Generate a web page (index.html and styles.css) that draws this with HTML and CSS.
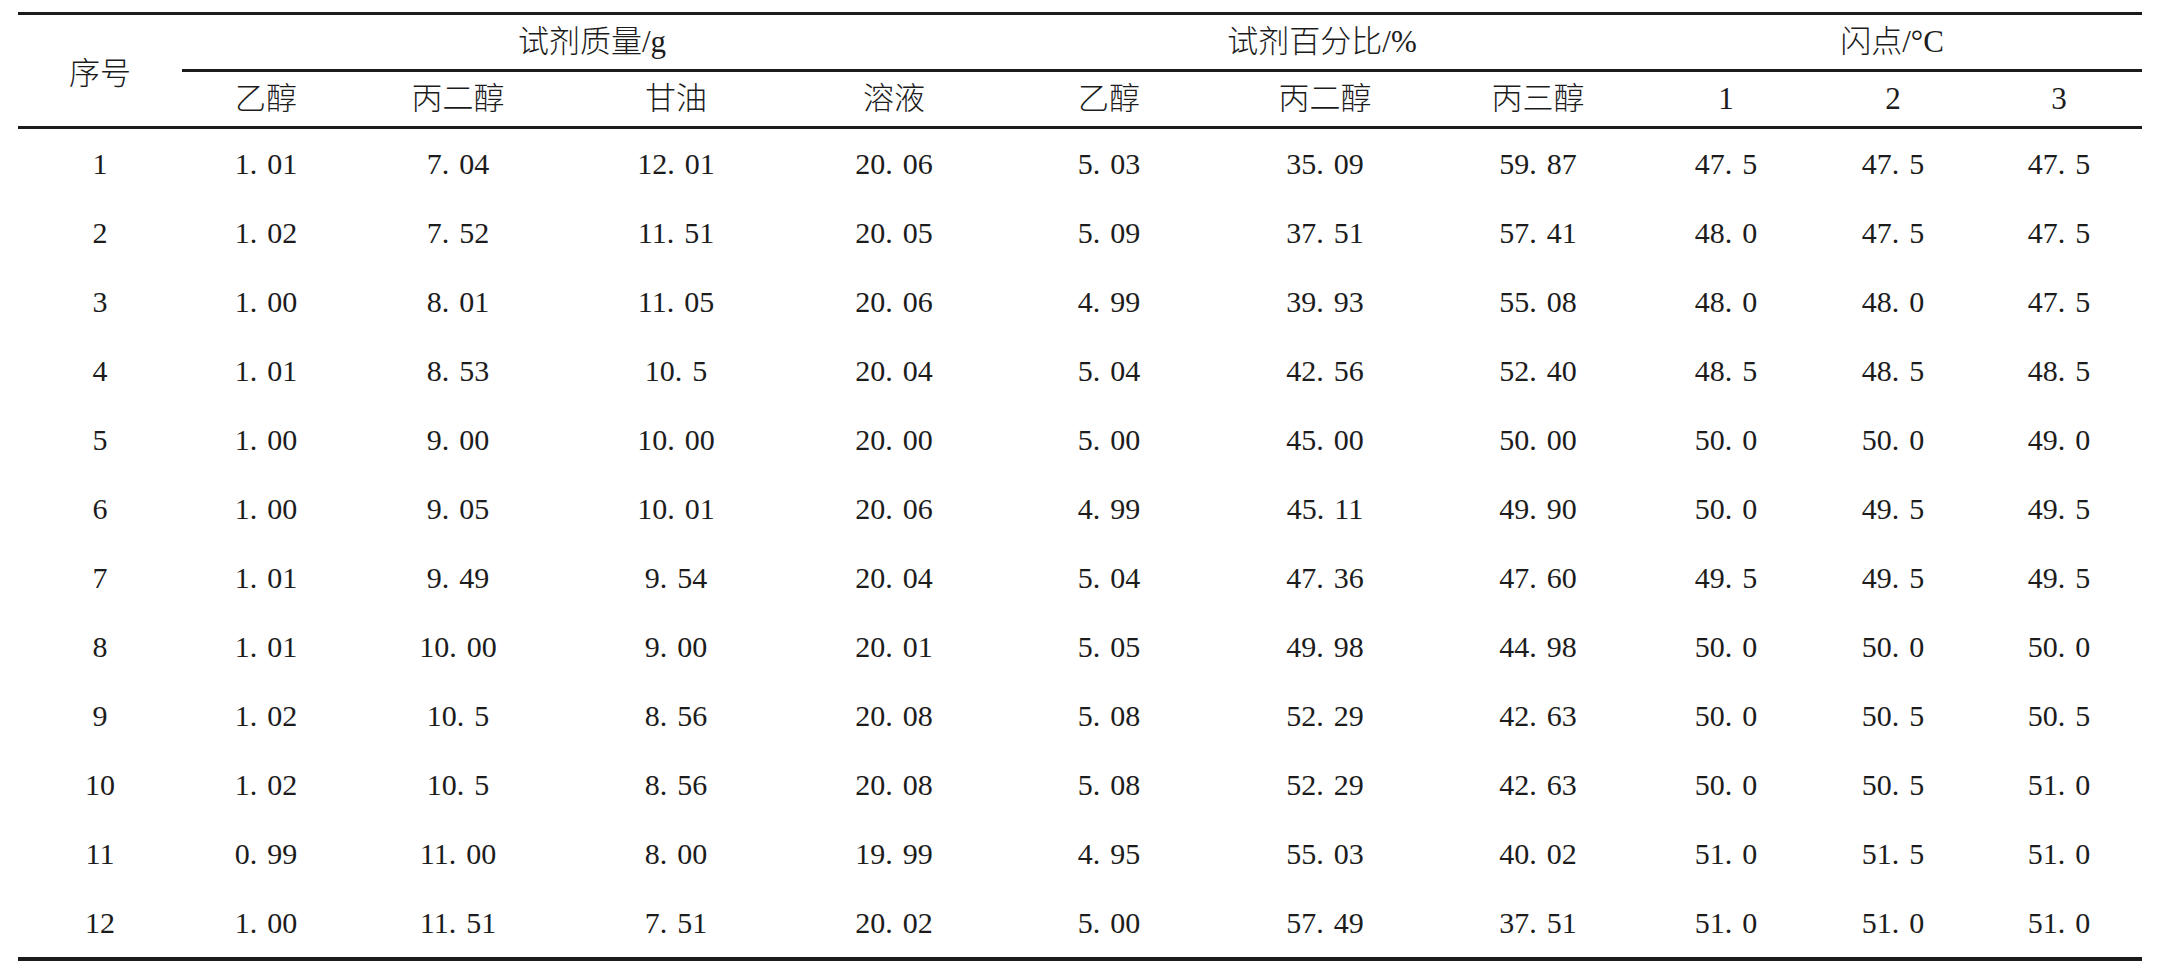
FILE: index.html
```html
<!DOCTYPE html>
<html lang="zh-CN">
<head>
<meta charset="utf-8">
<title>试剂配比与闪点</title>
<link rel="stylesheet" href="styles.css">
</head>
<body>
<table class="data">
  <colgroup>
    <col class="c0"><col class="c1"><col class="c2"><col class="c3"><col class="c4"><col class="c5"><col class="c6"><col class="c7"><col class="c8"><col class="c9"><col class="c10">
  </colgroup>
  <thead>
    <tr class="group">
      <th class="idx" rowspan="2">序号</th>
      <th class="grp" colspan="4"><div class="grp-label">试剂质量/g</div></th>
      <th class="grp" colspan="3"><div class="grp-label">试剂百分比/%</div></th>
      <th class="grp last" colspan="3"><div class="grp-label">闪点/°C</div></th>
    </tr>
    <tr class="sub">
      <th>乙醇</th><th>丙二醇</th><th>甘油</th><th>溶液</th>
      <th>乙醇</th><th>丙二醇</th><th>丙三醇</th>
      <th>1</th><th>2</th><th>3</th>
    </tr>
  </thead>
  <tbody>
    <tr><td>1</td><td>1<span class="d">.</span>01</td><td>7<span class="d">.</span>04</td><td>12<span class="d">.</span>01</td><td>20<span class="d">.</span>06</td><td>5<span class="d">.</span>03</td><td>35<span class="d">.</span>09</td><td>59<span class="d">.</span>87</td><td>47<span class="d">.</span>5</td><td>47<span class="d">.</span>5</td><td>47<span class="d">.</span>5</td></tr>
    <tr><td>2</td><td>1<span class="d">.</span>02</td><td>7<span class="d">.</span>52</td><td>11<span class="d">.</span>51</td><td>20<span class="d">.</span>05</td><td>5<span class="d">.</span>09</td><td>37<span class="d">.</span>51</td><td>57<span class="d">.</span>41</td><td>48<span class="d">.</span>0</td><td>47<span class="d">.</span>5</td><td>47<span class="d">.</span>5</td></tr>
    <tr><td>3</td><td>1<span class="d">.</span>00</td><td>8<span class="d">.</span>01</td><td>11<span class="d">.</span>05</td><td>20<span class="d">.</span>06</td><td>4<span class="d">.</span>99</td><td>39<span class="d">.</span>93</td><td>55<span class="d">.</span>08</td><td>48<span class="d">.</span>0</td><td>48<span class="d">.</span>0</td><td>47<span class="d">.</span>5</td></tr>
    <tr><td>4</td><td>1<span class="d">.</span>01</td><td>8<span class="d">.</span>53</td><td>10<span class="d">.</span>5</td><td>20<span class="d">.</span>04</td><td>5<span class="d">.</span>04</td><td>42<span class="d">.</span>56</td><td>52<span class="d">.</span>40</td><td>48<span class="d">.</span>5</td><td>48<span class="d">.</span>5</td><td>48<span class="d">.</span>5</td></tr>
    <tr><td>5</td><td>1<span class="d">.</span>00</td><td>9<span class="d">.</span>00</td><td>10<span class="d">.</span>00</td><td>20<span class="d">.</span>00</td><td>5<span class="d">.</span>00</td><td>45<span class="d">.</span>00</td><td>50<span class="d">.</span>00</td><td>50<span class="d">.</span>0</td><td>50<span class="d">.</span>0</td><td>49<span class="d">.</span>0</td></tr>
    <tr><td>6</td><td>1<span class="d">.</span>00</td><td>9<span class="d">.</span>05</td><td>10<span class="d">.</span>01</td><td>20<span class="d">.</span>06</td><td>4<span class="d">.</span>99</td><td>45<span class="d">.</span>11</td><td>49<span class="d">.</span>90</td><td>50<span class="d">.</span>0</td><td>49<span class="d">.</span>5</td><td>49<span class="d">.</span>5</td></tr>
    <tr><td>7</td><td>1<span class="d">.</span>01</td><td>9<span class="d">.</span>49</td><td>9<span class="d">.</span>54</td><td>20<span class="d">.</span>04</td><td>5<span class="d">.</span>04</td><td>47<span class="d">.</span>36</td><td>47<span class="d">.</span>60</td><td>49<span class="d">.</span>5</td><td>49<span class="d">.</span>5</td><td>49<span class="d">.</span>5</td></tr>
    <tr><td>8</td><td>1<span class="d">.</span>01</td><td>10<span class="d">.</span>00</td><td>9<span class="d">.</span>00</td><td>20<span class="d">.</span>01</td><td>5<span class="d">.</span>05</td><td>49<span class="d">.</span>98</td><td>44<span class="d">.</span>98</td><td>50<span class="d">.</span>0</td><td>50<span class="d">.</span>0</td><td>50<span class="d">.</span>0</td></tr>
    <tr><td>9</td><td>1<span class="d">.</span>02</td><td>10<span class="d">.</span>5</td><td>8<span class="d">.</span>56</td><td>20<span class="d">.</span>08</td><td>5<span class="d">.</span>08</td><td>52<span class="d">.</span>29</td><td>42<span class="d">.</span>63</td><td>50<span class="d">.</span>0</td><td>50<span class="d">.</span>5</td><td>50<span class="d">.</span>5</td></tr>
    <tr><td>10</td><td>1<span class="d">.</span>02</td><td>10<span class="d">.</span>5</td><td>8<span class="d">.</span>56</td><td>20<span class="d">.</span>08</td><td>5<span class="d">.</span>08</td><td>52<span class="d">.</span>29</td><td>42<span class="d">.</span>63</td><td>50<span class="d">.</span>0</td><td>50<span class="d">.</span>5</td><td>51<span class="d">.</span>0</td></tr>
    <tr><td>11</td><td>0<span class="d">.</span>99</td><td>11<span class="d">.</span>00</td><td>8<span class="d">.</span>00</td><td>19<span class="d">.</span>99</td><td>4<span class="d">.</span>95</td><td>55<span class="d">.</span>03</td><td>40<span class="d">.</span>02</td><td>51<span class="d">.</span>0</td><td>51<span class="d">.</span>5</td><td>51<span class="d">.</span>0</td></tr>
    <tr><td>12</td><td>1<span class="d">.</span>00</td><td>11<span class="d">.</span>51</td><td>7<span class="d">.</span>51</td><td>20<span class="d">.</span>02</td><td>5<span class="d">.</span>00</td><td>57<span class="d">.</span>49</td><td>37<span class="d">.</span>51</td><td>51<span class="d">.</span>0</td><td>51<span class="d">.</span>0</td><td>51<span class="d">.</span>0</td></tr>
  </tbody>
</table>
</body>
</html>
```

FILE: styles.css
```css
html, body {
  margin: 0;
  padding: 0;
  background: #ffffff;
}

body {
  padding: 12px 0 0 18px;
  color: #1c1c1c;
  font-family: "Liberation Serif", "Noto Sans CJK SC", serif;
}

.data {
  table-layout: fixed;
  width: 2124px;
  border-collapse: separate;
  border-spacing: 0;
  border-top: 3px solid #1c1c1c;
  border-bottom: 4px solid #1c1c1c;
}

.c0 { width: 164px; }
.c1 { width: 168px; }
.c2 { width: 216px; }
.c3 { width: 220px; }
.c4 { width: 216px; }
.c5 { width: 214px; }
.c6 { width: 218px; }
.c7 { width: 208px; }
.c8 { width: 168px; }
.c9 { width: 166px; }
.c10 { width: 166px; }

.data th,
.data td {
  padding: 0;
  text-align: center;
  white-space: nowrap;
}

.data th {
  font-size: 31px;
  font-weight: 300;
}

.data td {
  font-size: 30px;
  font-weight: 400;
  height: 69px;
  line-height: 69px;
}

.idx {
  vertical-align: middle;
  border-bottom: 3px solid #1c1c1c;
}

.grp {
  padding: 0 9px 0 11px;
  vertical-align: bottom;
}

.grp.last {
  padding-right: 0;
}

.grp-label {
  line-height: 54px;
  border-bottom: 3px solid #1c1c1c;
}

.sub th {
  line-height: 54px;
  border-bottom: 3px solid #1c1c1c;
}

.d {
  margin-right: 10px;
}
```
